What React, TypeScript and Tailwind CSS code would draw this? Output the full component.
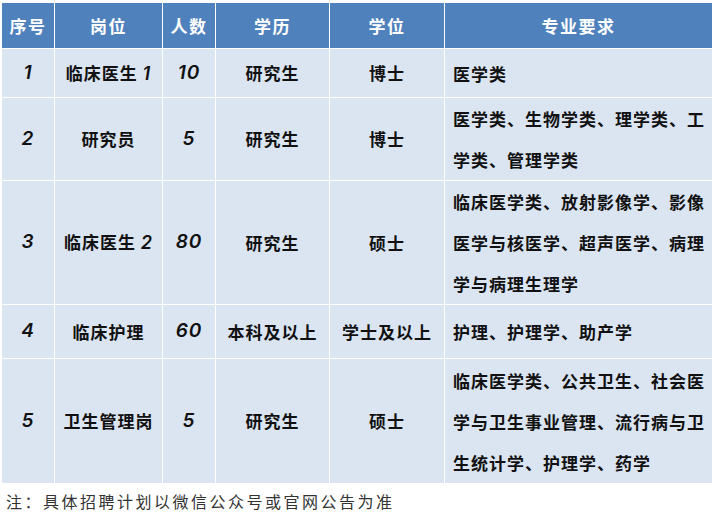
const CJK = "font-['Noto_Sans_CJK_SC','Noto_Sans',sans-serif]";

const rows = [
  { no: "1", post: "临床医生", postNo: "1", count: "10", edu: "研究生", deg: "博士", major: "医学类", h: "h-[48px]" },
  { no: "2", post: "研究员", count: "5", edu: "研究生", deg: "博士", major: "医学类、生物学类、理学类、工学类、管理学类", h: "h-[82px]" },
  { no: "3", post: "临床医生", postNo: "2", count: "80", edu: "研究生", deg: "硕士", major: "临床医学类、放射影像学、影像医学与核医学、超声医学、病理学与病理生理学", h: "h-[123px]" },
  { no: "4", post: "临床护理", count: "60", edu: "本科及以上", deg: "学士及以上", major: "护理、护理学、助产学", h: "h-[53px]" },
  { no: "5", post: "卫生管理岗", count: "5", edu: "研究生", deg: "硕士", major: "临床医学类、公共卫生、社会医学与卫生事业管理、流行病与卫生统计学、护理学、药学", h: "h-[124px]" },
];

const headers = ["序号", "岗位", "人数", "学历", "学位", "专业要求"];

function Num({ v }: { v: string }) {
  return <span className="italic font-semibold font-['Inter',sans-serif] text-[19px] tracking-[1px]">{v}</span>;
}

export default function App() {
  return (
    <div className={`w-[715px] h-[519px] bg-white ${CJK} overflow-hidden`}>
      <div className="pt-[3px] pl-[2px]">
        <div className="grid grid-cols-[52px_107px_52px_113px_114px_267px] gap-px w-[710px] bg-white">
          {headers.map((h) => (
            <div
              key={h}
              className="h-[45px] bg-[#4f81bd] flex items-center justify-center text-white font-bold text-[17px] tracking-[1.5px]"
            >
              {h}
            </div>
          ))}
          {rows.map((r) => (
            <>
              <div key={r.no + "a"} className={`${r.h} bg-[#dbe5f1] flex items-center justify-center text-[#111]`}>
                <Num v={r.no} />
              </div>
              <div key={r.no + "b"} className={`${r.h} bg-[#dbe5f1] flex items-center justify-center text-[#111] font-semibold text-[17px] tracking-[1px]`}>
                <span>
                  {r.post}
                  {r.postNo && (
                    <>
                      {" "}
                      <span className="italic font-semibold font-['Inter',sans-serif] text-[18px]">{r.postNo}</span>
                    </>
                  )}
                </span>
              </div>
              <div key={r.no + "c"} className={`${r.h} bg-[#dbe5f1] flex items-center justify-center text-[#111]`}>
                <Num v={r.count} />
              </div>
              <div key={r.no + "d"} className={`${r.h} bg-[#dbe5f1] flex items-center justify-center text-[#111] font-semibold text-[17px] tracking-[1px]`}>
                {r.edu}
              </div>
              <div key={r.no + "e"} className={`${r.h} bg-[#dbe5f1] flex items-center justify-center text-[#111] font-semibold text-[17px] tracking-[1px]`}>
                {r.deg}
              </div>
              <div key={r.no + "f"} className={`${r.h} bg-[#dbe5f1] flex items-center pl-[8px] pr-[4px] text-[#111] font-semibold text-[17px] tracking-[1px] leading-[41px]`}>
                <span>{r.major}</span>
              </div>
            </>
          ))}
        </div>
      </div>
      <div className="pl-[6px] pt-[4px] text-[16px] tracking-[2.5px] text-[#333] leading-[28px]">
        注：具体招聘计划以微信公众号或官网公告为准
      </div>
    </div>
  );
}
